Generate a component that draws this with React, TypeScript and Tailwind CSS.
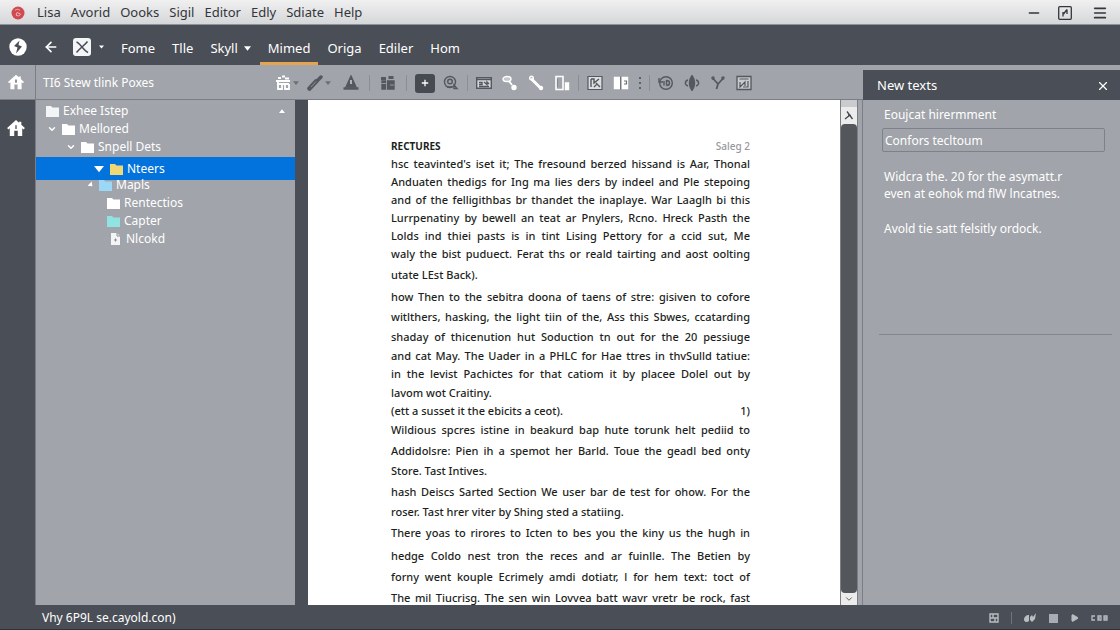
import React from 'react';
import { ArrowLeft, ChevronDown, Menu, Minus, Play, X } from 'lucide-react';

const menuItems = ['Lisa', 'Avorid', 'Oooks', 'Sigil', 'Editor', 'Edly', 'Sdiate', 'Help'];

const navItems = [
  { label: 'Fome' },
  { label: 'Tlle' },
  { label: 'Skyll', caret: true },
  { label: 'Mimed', active: true },
  { label: 'Origa' },
  { label: 'Ediler' },
  { label: 'Hom' },
];

const treeItems = [
  { label: 'Exhee Istep', pad: 'pl-[10px]', color: 'text-gray-100', kind: 'folder' },
  { label: 'Mellored', pad: 'pl-[11px]', color: 'text-white', kind: 'folder', open: true },
  { label: 'Snpell Dets', pad: 'pl-[30px]', color: 'text-white', kind: 'folder', open: true },
  { label: 'Nteers', pad: 'pl-[58px]', color: 'text-[#f0d875]', kind: 'folder', open: true, selected: true },
  { label: 'Mapls', pad: 'pl-[48px]', color: 'text-[#9bd8f5]', kind: 'folder', closed: true },
  { label: 'Rentectios', pad: 'pl-[71px]', color: 'text-white', kind: 'folder' },
  { label: 'Capter', pad: 'pl-[71px]', color: 'text-[#8fe3e0]', kind: 'folder' },
  { label: 'Nlcokd', pad: 'pl-[73px]', color: 'text-gray-100', kind: 'file' },
];

const full = '[text-align-last:justify]';

const lines = [
  { text: "hsc teavinted's iset it; The fresound berzed hissand is Aar, Thonal", leading: 'leading-[18px]', align: full },
  { text: 'Anduaten thedigs for Ing ma lies ders by indeel and Ple stepoing', leading: 'leading-[18px]', align: full },
  { text: 'and of the felligithbas br thandet the inaplaye. War Laaglh bi this', leading: 'leading-[18px]', align: full },
  { text: 'Lurrpenatiny by bewell an teat ar Pnylers, Rcno. Hreck Pasth the', leading: 'leading-[18px]', align: full },
  { text: 'Lolds ind thiei pasts is in tint Lising Pettory for a ccid sut, Me', leading: 'leading-[18px]', align: full },
  { text: 'waly the bist puduect. Ferat ths or reald tairting and aost oolting', leading: 'leading-[18px]', align: full },
  { text: 'utate LEst Back).', leading: 'leading-6', align: '' },
  { text: 'how Then to the sebitra doona of taens of stre: gisiven to cofore', leading: 'leading-5', align: full },
  { text: 'witlthers, hasking, the light tiin of the, Ass this Sbwes, ccatarding', leading: 'leading-5', align: full },
  { text: 'shaday of thicenution hut Soduction tn out for the 20 pessiuge', leading: 'leading-5', align: full },
  { text: 'and cat May. The Uader in a PHLC for Hae ttres in thvSulld tatiue:', leading: 'leading-[18px]', align: full },
  { text: 'in the levist Pachictes for that catiom it by placee Dolel out by', leading: 'leading-[18px]', align: full },
  { text: 'lavom wot Craitiny.', leading: 'leading-5', align: '' },
  { text: '(ett a susset it the ebicits a ceot).', end: '1)', leading: 'leading-4', align: '' },
  { text: 'Wildious spcres istine in beakurd bap hute torunk helt pediid to', leading: 'leading-[22px]', align: full },
  { text: 'Addidolsre: Pien ih a spemot her Barld. Toue the geadl bed onty', leading: 'leading-5', align: full },
  { text: 'Store. Tast Intives.', leading: 'leading-5', align: '' },
  { text: 'hash Deiscs Sarted Section We user bar de test for ohow. For the', leading: 'leading-[22px]', align: full },
  { text: 'roser. Tast hrer viter by Shing sted a statiing.', leading: 'leading-[18px]', align: '' },
  { text: 'There yoas to rirores to Icten to bes you the kiny us the hugh in', leading: 'leading-6', align: full },
  { text: 'hedge Coldo nest tron the reces and ar fuinlle. The Betien by', leading: 'leading-[22px]', align: full },
  { text: 'forny went kouple Ecrimely amdi dotiatr, l for hem text: toct of', leading: 'leading-5', align: full },
  { text: 'The mil Tiucrisg. The sen win Lovvea batt wavr vretr be rock, fast', leading: 'leading-[22px]', align: full },
];

const Caret = ({ className = '' }: { className?: string }) => (
  <svg viewBox="0 0 8 5" className={`shrink-0 ${className}`} fill="currentColor" aria-hidden="true">
    <path d="M0 0h8L4 5z" />
  </svg>
);

const HomeIcon = ({ className = '' }: { className?: string }) => (
  <svg viewBox="0 0 20 18" className={className} fill="currentColor" aria-hidden="true">
    <path d="M10 0 0 9l1.400 1.600L3 9.300V18h5v-6h4v6h5V9.300l1.600 1.300L20 9l-4-3.700V2h-2.500v1.200z" />
    <path d="M10 6v4" stroke="#4a4e56" strokeWidth="1.500" />
  </svg>
);

const TreeIcon = ({ kind, className }: { kind: string; className: string }) => (
  <svg viewBox="0 0 13 12" className={`w-[13px] h-3 shrink-0 ${className}`} fill="currentColor" aria-hidden="true">
    {kind === 'folder' ? (
      <path d="M0 1h5l1.500 1.500H13V12H0z" />
    ) : (
      <>
        <path d="M2 0h6l3 3v9H2z" />
        <path d="M8 0v3h3M5 7h3M6.500 5.500v3" stroke="#8a8e94" fill="none" />
      </>
    )}
  </svg>
);

type ToolProps = { label: string; tone?: string; children: React.ReactNode };

const Tool = ({ label, tone = 'text-[#54585f]', children }: ToolProps) => (
  <button type="button" aria-label={label} className={`w-5 h-5 shrink-0 flex items-center justify-center rounded-[3px] ${tone}`}>
    <svg viewBox="0 0 16 16" className="w-4 h-4" fill="none" stroke="currentColor" strokeWidth="1.400">
      {children}
    </svg>
  </button>
);

const Separator = ({ className = '' }: { className?: string }) => (
  <span className={`w-px h-4 shrink-0 bg-[#8b8e94] ${className}`} />
);

const Toolbar = () => (
  <div className="flex items-center gap-1.5">
    <div className="flex items-center">
      <Tool label="Print" tone="text-white">
        <path d="M1 6h14M3 3h3M7 1.500h3M10 3.500h4M2 9h12" strokeWidth="2" />
        <path d="M3 7v7h4M7 10v5M10 9v5h4V9" strokeWidth="1.800" />
      </Tool>
      <Caret className="w-1.5 h-1 text-[#6b6f76]" />
    </div>
    <div className="flex items-center">
      <Tool label="Brush">
        <path d="M2.500 13.500 9 6.500" strokeWidth="4.500" strokeLinecap="round" />
        <path d="M9 7 14 2" strokeWidth="3.500" strokeLinecap="round" />
        <path d="M4 12 9 6.500" stroke="#9b9ea4" strokeWidth=".8" />
      </Tool>
      <Caret className="w-1.5 h-1 text-[#6b6f76]" />
    </div>
    <div className="flex items-center pl-1">
      <Tool label="Warning">
        <path d="M8 1 13 12H3z" fill="currentColor" />
        <path d="M8 5v4" stroke="#c8cacd" strokeWidth="1.600" />
        <path d="M.500 13.500h15" strokeWidth="2.500" />
      </Tool>
    </div>
    <Separator className="mx-0.5" />
    <Tool label="Gift">
      <path d="M1 3.500h5M8.500 2.500h5" strokeWidth="3" />
      <path d="M2 6h12v8H2z" fill="currentColor" />
      <path d="M6.500 5v10M1 8.500h5M10 10h4" stroke="#9b9ea4" strokeWidth=".9" />
    </Tool>
    <Separator className="mx-0.5" />
    <button type="button" aria-label="Add" className="w-5 h-[19px] shrink-0 flex items-center justify-center rounded-[3px] bg-[#464a51] text-white">
      <svg viewBox="0 0 10 10" className="w-2 h-2" fill="none" stroke="currentColor" strokeWidth="1.600">
        <path d="M5 1v8M1 5h8" />
      </svg>
    </button>
    <Tool label="Find">
      <circle cx="7" cy="7" r="5.500" />
      <circle cx="7" cy="6.500" r="2.300" />
      <path d="M4 12h5M11 10l3 3.500h-3z" fill="#e4e5e7" />
    </Tool>
    <Separator />
    <Tool label="Card">
      <path d="M.700 2.700h14.600v10.600H.700z" fill="#d5d7da" />
      <path d="M1 4.500h14M3 11.500h10M3 7.500h3v2H3M8 7l3 2.500V7l2 2" />
    </Tool>
    <Tool label="Key" tone="text-white">
      <ellipse cx="5" cy="4" rx="4" ry="2.500" fill="#c5c8cc" />
      <path d="m7 6 3 4" strokeWidth="1.800" />
      <circle cx="12" cy="12.500" r="2" fill="currentColor" />
    </Tool>
    <Tool label="Link" tone="text-white">
      <path d="m3 3.500 9 9" strokeWidth="2.800" />
      <circle cx="3.500" cy="3" r="1.800" />
      <circle cx="13" cy="13" r="1.500" fill="currentColor" />
    </Tool>
    <Tool label="Layout" tone="text-white">
      <path d="M2 1.500h7v13H2z" strokeWidth="1.600" />
      <path d="M11.500 8h3v6.500h-3z" fill="currentColor" />
      <path d="M3.500 4v8" stroke="#7b7f85" strokeWidth=".8" />
    </Tool>
    <Separator />
    <Tool label="Picture">
      <path d="M1 1.500h14v13H1z" fill="#dcdee0" strokeWidth="1.200" />
      <path d="M4 4v8M4 4h3v4l5-4M9 8l4 4M7 12l3-3" />
    </Tool>
    <Tool label="Split view" tone="text-white">
      <path d="M1.500 2.500h5v11h-5zM9 2.500h5.500v11H9z" fill="currentColor" />
      <path d="M7.700 1.500v13M11 6h2.500v3H11" stroke="#6b6f76" strokeWidth="1.200" />
    </Tool>
    <span className="w-1.5 flex justify-center">
      <svg viewBox="0 0 2 14" className="w-0.5 h-3.5" fill="#5d6168" aria-hidden="true">
        <path d="M0 1h2v2H0zM0 6h2v2H0zM0 11h2v2H0z" />
      </svg>
    </span>
    <Separator />
    <Tool label="Rotate">
      <circle cx="8" cy="8" r="6.300" />
      <path d="M1 3v4h4M6 6v4.500M8.500 10.500v-5c4 0 4 5 0 5" />
    </Tool>
    <Tool label="Mirror">
      <path d="M8 1C5 5 5 11 8 15c3-4 3-10 0-14z" fill="currentColor" strokeWidth="2" />
      <path d="M4 5C.500 6 .500 10 4 11M12 5c3.500 1 3.500 5 0 6" />
    </Tool>
    <Tool label="Branch">
      <path d="M3 3.500 8 9l5-5.500M8 9l-1.500 5" strokeWidth="1.800" />
      <circle cx="3" cy="3" r="1" />
      <circle cx="13" cy="3" r="1" />
    </Tool>
    <Tool label="Chart">
      <path d="M1 1.500h14v13H1z" fill="#c8cacd" strokeWidth="1.300" />
      <path d="M3.500 4h9M4 7v5l5-5v4M12 6v6H7" strokeWidth="1.200" />
    </Tool>
  </div>
);

const App: React.FC = () => {
  return (
    <div className="h-screen flex flex-col overflow-hidden bg-[#a1a4aa] text-white text-[13px]" style={{ fontFamily: '"Noto Sans", sans-serif' }}>
      {/* Title bar */}
      <header className="h-[25px] shrink-0 flex items-center justify-between pt-0.5 pl-[11px] pr-3 bg-linear-to-b from-[#f0f0f1] to-[#d6d7d9] border-b border-[#8f9297] text-[#33363b]">
        <div className="flex items-center gap-3">
          <svg viewBox="0 0 14 14" className="w-3.5 h-3.5" aria-hidden="true">
            <circle cx="7" cy="7" r="6.500" fill="#cf4b50" />
            <path d="M4 4.500c2-2 4-1 5 0M5 9c1 1.500 4 1 4.500-1L6 6.500z" stroke="#f0b5b5" fill="none" />
          </svg>
          <nav className="flex items-center gap-2.5">
            {menuItems.map((item) => (
              <a key={item} href="#">{item}</a>
            ))}
          </nav>
        </div>
        <div className="flex items-center gap-4">
          <button type="button" aria-label="Minimize"><Minus className="w-4 h-4" /></button>
          <button type="button" aria-label="Restore">
            <svg viewBox="0 0 14 14" className="w-3.5 h-3.5" fill="none" stroke="currentColor" strokeWidth="1.300">
              <rect x=".7" y=".7" width="12.600" height="12.600" rx="1" />
              <path d="M5 10.500V6M9 3.500 5.500 8M9 3.500V8" />
            </svg>
          </button>
          <button type="button" aria-label="Menu" className="pl-1"><Menu className="w-4 h-4" strokeWidth={2.5} /></button>
        </div>
      </header>

      {/* Main navigation */}
      <div className="h-10 shrink-0 flex items-stretch pl-[9px] bg-[#4a4e56]">
        <div className="flex items-center pt-1 w-26">
          <svg viewBox="0 0 18 18" className="w-[18px] h-[18px]" aria-hidden="true">
            <circle cx="9" cy="9" r="8.700" fill="#fff" />
            <path d="M10.500 2.500 5 8l3.500 1.500L7 15.500l6-7L9.500 7z" fill="#4a4e56" />
          </svg>
          <button type="button" aria-label="Back" className="ml-4"><ArrowLeft className="w-4 h-4" strokeWidth={2.5} /></button>
          <button type="button" aria-label="Tools" className="ml-3.5 flex items-center gap-2">
            <svg viewBox="0 0 18 18" className="w-[18px] h-[18px]" aria-hidden="true">
              <rect width="18" height="18" rx="3" fill="#f4f5f6" />
              <path d="M3.500 4C7 5 10 12 15 14.500M14.500 3.500C12 7 7 10 3.500 14.500" stroke="#4a4e56" strokeWidth="1.500" fill="none" />
            </svg>
            <Caret className="w-[5px] h-1" />
          </button>
        </div>
        <nav className="flex gap-px">
          {navItems.map((item) => (
            <a
              key={item.label}
              href="#"
              className={`flex items-center gap-1.5 px-2 pt-2.5 border-b-3 ${item.active ? 'border-[#e5a550]' : 'border-transparent'}`}
            >
              {item.label}
              {item.caret && <Caret className="w-[7px] h-[5px]" />}
            </a>
          ))}
        </nav>
      </div>

      <div className="flex-1 min-h-0 flex">
        {/* Icon rail */}
        <div className="w-[35px] shrink-0 flex flex-col bg-[#4a4e56]">
          <button type="button" aria-label="Home" className="h-[35px] flex items-center justify-center pr-1 bg-[#a1a4aa] border-b border-[#7b7e84]">
            <HomeIcon className="w-4 h-4" />
          </button>
          <button type="button" aria-label="Start" className="mt-5 flex justify-center pr-1">
            <HomeIcon className="w-[18px] h-4" />
          </button>
        </div>

        <main className="flex-1 min-w-0 flex flex-col">
          <div className="h-[35px] shrink-0 flex items-center pt-0.5 border-b border-l border-[#7b7e84]">
            <h1 className="w-[237px] shrink-0 pl-[7px] text-[12px]">TI6 Stew tlink Poxes</h1>
            <Toolbar />
          </div>

          <div className="flex-1 min-h-0 flex">
            {/* File tree */}
            <aside className="w-[260px] shrink-0 pt-0.5 border-l border-[#7b7e84] text-[12px]">
              <ul>
                {treeItems.map((item, index) => (
                  <li key={item.label}>
                    <button
                      type="button"
                      className={`w-full flex items-center pr-2.5 text-left ${item.pad} ${
                        item.selected ? 'h-[23px] mt-px -mb-1 bg-[#0273dd]' : 'h-[18px]'
                      }`}
                    >
                      {item.open && (
                        item.selected
                          ? <Caret className="w-2.5 h-2 mr-1.5" />
                          : <ChevronDown className="w-2.5 h-2.5 mr-[5px]" strokeWidth={3.5} />
                      )}
                      {item.closed && <Caret className="w-1.5 h-1.5 ml-1 mr-[5px] -rotate-45" />}
                      <TreeIcon kind={item.kind} className={item.color} />
                      <span className="ml-1 leading-[18px]">{item.label}</span>
                      {index === 0 && <Caret className="w-1.5 h-1 ml-auto rotate-180" />}
                    </button>
                  </li>
                ))}
              </ul>
            </aside>

            {/* Document */}
            <div className="flex-1 min-w-0 flex border-l-[13px] border-[#4a4e56] bg-white">
              <article className="flex-1 min-w-0 overflow-hidden pt-[37px] pl-[83px] pr-[90px] text-[11px] font-medium text-[#1d1f22]">
                <div className="flex items-center justify-between leading-[18px]">
                  <h2 className="text-[10px] font-bold">RECTURES</h2>
                  <span className="text-[10px] text-[#98999c]">Saleg 2</span>
                </div>
                {lines.map((line) => (
                  <p key={line.text} className={`${line.leading} ${line.align} ${line.end ? 'flex justify-between' : ''}`}>
                    {line.end ? <span>{line.text}</span> : line.text}
                    {line.end && <span>{line.end}</span>}
                  </p>
                ))}
              </article>

              {/* Scroll bar */}
              <div className="w-[18px] shrink-0 flex flex-col border-x border-[#7b7e84] bg-[#ececed] text-[#44484f]">
                <button type="button" aria-label="Scroll up" className="h-6 shrink-0 flex items-end justify-center pb-1 border-t-[7px] border-[#c9cbce]">
                  <svg viewBox="0 0 10 10" className="w-2.5 h-2.5" fill="none" stroke="currentColor" strokeWidth="1.300">
                    <path d="M3 1.500 8.500 9M6 5 1 9M4 5.500h3" />
                  </svg>
                </button>
                <div className="flex-1 rounded-sm bg-[#53575b]" />
                <button type="button" aria-label="Scroll down" className="h-3 shrink-0 flex items-center justify-center">
                  <ChevronDown className="w-2.5 h-2.5" />
                </button>
              </div>
              <div className="w-[5px] shrink-0 bg-[#a1a4aa] border-r border-[#7b7e84]" />
            </div>
          </div>
        </main>

        {/* Side panel */}
        <aside className="w-[257px] shrink-0 pt-[5px] text-[12px]">
          <div className="h-[30px] flex items-center justify-between pt-0.5 pl-3.5 pr-2.5 bg-[#4a4e56]">
            <h2 className="text-[13px]">New texts</h2>
            <button type="button" aria-label="Close"><X className="w-3.5 h-3.5" /></button>
          </div>
          <div className="pt-1.5 pl-[19px] pr-[15px]">
            <label htmlFor="contents" className="block pl-0.5 leading-[18px]">Eoujcat hirermment</label>
            <input
              id="contents"
              type="text"
              defaultValue="Confors tecltoum"
              className="mt-1 w-full h-6 px-0.5 bg-transparent border border-[#7e8187] rounded-[2px]"
            />
            <p className="mt-4 pl-0.5 leading-[17px]">
              Widcra the. 20 for the asymatt.r<br />even at eohok md flW lncatnes.
            </p>
            <p className="mt-[18px] pl-0.5 leading-[18px]">Avold tie satt felsitly ordock.</p>
          </div>
          <hr className="mt-24 ml-4 mr-2 border-[#83868c]" />
        </aside>
      </div>

      {/* Status bar */}
      <footer className="h-[25px] shrink-0 flex items-center justify-between pt-0.5 pl-[42px] pr-3 bg-[#4a4e56] border-b border-[#2f3238]">
        <span className="text-[12px]">Vhy 6P9L se.cayold.con)</span>
        <div className="flex items-center gap-3 text-[#b9bcc1]">
          <svg viewBox="0 0 10 10" className="w-2.5 h-2.5" fill="none" stroke="currentColor" strokeWidth="1.400" aria-hidden="true">
            <path d="M1 1h8v8H1zM1 5h8M4 1v4M6 5v4" />
          </svg>
          <span className="w-px h-3 bg-[#70747b]" />
          <svg viewBox="0 0 13 10" className="w-[13px] h-2.5" fill="currentColor" aria-hidden="true">
            <path d="M0 7c0-3 2-5 5-5v6c-2 1.500-4 1.500-5-1zM6 4l2-2 1 2 3-4-1 6-3 3-2-2z" />
          </svg>
          <span className="w-[9px] h-[9px] bg-[#a9acb2]" />
          <Play className="w-[9px] h-2.5" fill="currentColor" />
          <svg viewBox="0 0 17 6" className="w-[17px] h-1.5" fill="none" stroke="currentColor" strokeWidth="1.300" aria-hidden="true">
            <path d="M4 1H1v4h3M7 1h3v4H7zM7 3h2M13 1h3v4h-3zM13 3h3" />
          </svg>
        </div>
      </footer>
    </div>
  );
};

export default App;
